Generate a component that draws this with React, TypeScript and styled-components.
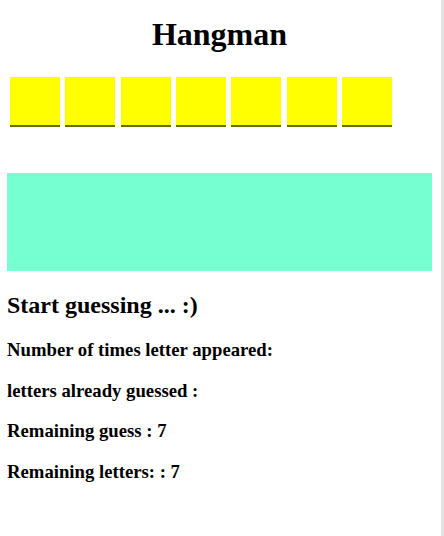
import React from "react";
import styled, { createGlobalStyle } from "styled-components";

const Global = createGlobalStyle`
  html, body { margin: 0; padding: 0; background: #ffffff; }
  body { font-family: "Liberation Serif", "Times New Roman", serif; color: #000; }
`;

const Frame = styled.div`
  box-sizing: border-box;
  width: 444px;
  min-height: 536px;
  padding: 1px 9px 8px 7px;
  border-right: 3px solid #e3e3e3;
`;

const Title = styled.h1`
  font-size: 32px;
  font-weight: bold;
  text-align: center;
  margin: 15px 0 24px;
`;

const Tiles = styled.div`
  display: flex;
  gap: 5.33px;
  padding-left: 3px;
`;

const Tile = styled.div`
  width: 50px;
  height: 48px;
  background: #ffff00;
  border-bottom: 2px solid #6b6b00;
`;

const Board = styled.div`
  margin-top: 46px;
  height: 98px;
  background: #76ffd0;
`;

const Status = styled.h2`
  font-size: 24px;
  font-weight: bold;
  margin: 21px 0 20px;
`;

const Info = styled.h3`
  font-size: 18.72px;
  font-weight: bold;
  margin: 18.72px 0;
`;

export default function App() {
  const letters = Array.from({ length: 7 });
  return (
    <>
      <Global />
      <Frame>
        <Title>Hangman</Title>
        <Tiles>
          {letters.map((_, i) => (
            <Tile key={i} />
          ))}
        </Tiles>
        <Board />
        <Status>Start guessing ... :)</Status>
        <Info>Number of times letter appeared:</Info>
        <Info>letters already guessed :</Info>
        <Info>Remaining guess : 7</Info>
        <Info>Remaining letters: : 7</Info>
      </Frame>
    </>
  );
}
